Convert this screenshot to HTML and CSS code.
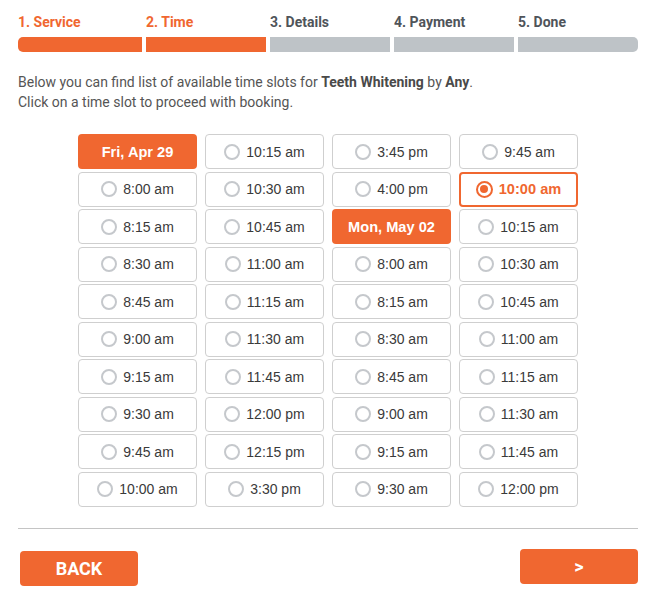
FILE: index.html
```html
<!DOCTYPE html>
<html lang="en">
<head>
<meta charset="utf-8">
<link rel="stylesheet" href="styles.css">
</head>
<body>
<div class="bkf">
  <div class="steps">
    <div class="step done"><span>1. Service</span><i></i></div>
    <div class="step done"><span>2. Time</span><i></i></div>
    <div class="step"><span>3. Details</span><i></i></div>
    <div class="step"><span>4. Payment</span><i></i></div>
    <div class="step"><span>5. Done</span><i></i></div>
  </div>

  <div class="info">
    Below you can find list of available time slots for <b>Teeth Whitening</b> by <b>Any</b>.<br>
    Click on a time slot to proceed with booking.
  </div>

  <div class="slots">
    <div class="col">
      <div class="day">Fri, Apr 29</div>
      <button class="hour"><em></em>8:00 am</button>
      <button class="hour"><em></em>8:15 am</button>
      <button class="hour"><em></em>8:30 am</button>
      <button class="hour"><em></em>8:45 am</button>
      <button class="hour"><em></em>9:00 am</button>
      <button class="hour"><em></em>9:15 am</button>
      <button class="hour"><em></em>9:30 am</button>
      <button class="hour"><em></em>9:45 am</button>
      <button class="hour"><em></em>10:00 am</button>
    </div>
    <div class="col">
      <button class="hour"><em></em>10:15 am</button>
      <button class="hour"><em></em>10:30 am</button>
      <button class="hour"><em></em>10:45 am</button>
      <button class="hour"><em></em>11:00 am</button>
      <button class="hour"><em></em>11:15 am</button>
      <button class="hour"><em></em>11:30 am</button>
      <button class="hour"><em></em>11:45 am</button>
      <button class="hour"><em></em>12:00 pm</button>
      <button class="hour"><em></em>12:15 pm</button>
      <button class="hour"><em></em>3:30 pm</button>
    </div>
    <div class="col">
      <button class="hour"><em></em>3:45 pm</button>
      <button class="hour"><em></em>4:00 pm</button>
      <div class="day">Mon, May 02</div>
      <button class="hour"><em></em>8:00 am</button>
      <button class="hour"><em></em>8:15 am</button>
      <button class="hour"><em></em>8:30 am</button>
      <button class="hour"><em></em>8:45 am</button>
      <button class="hour"><em></em>9:00 am</button>
      <button class="hour"><em></em>9:15 am</button>
      <button class="hour"><em></em>9:30 am</button>
    </div>
    <div class="col">
      <button class="hour"><em></em>9:45 am</button>
      <button class="hour active"><em></em>10:00 am</button>
      <button class="hour"><em></em>10:15 am</button>
      <button class="hour"><em></em>10:30 am</button>
      <button class="hour"><em></em>10:45 am</button>
      <button class="hour"><em></em>11:00 am</button>
      <button class="hour"><em></em>11:15 am</button>
      <button class="hour"><em></em>11:30 am</button>
      <button class="hour"><em></em>11:45 am</button>
      <button class="hour"><em></em>12:00 pm</button>
    </div>
  </div>

  <div class="nav">
    <button class="btn back">BACK</button>
    <button class="btn next">&gt;</button>
  </div>
</div>
</body>
</html>
```

FILE: styles.css
```css
* {box-sizing: border-box;}
body {margin: 0; font-family: Roboto, "Liberation Sans", sans-serif; color: #555;}
.bkf {width: 620px; margin-left: 18px; padding-top: 12px;}

.steps {display: flex;}
.step {width: 124px; padding-left: 4px;}
.step:first-child {padding-left: 0;}
.step span {display: block; font-size: 14px; font-weight: 700; line-height: 20px; color: #4f545a;}
.step i {display: block; height: 15px; margin-top: 5px; background: #bec3c7;}
.step.done span {color: #f06730;}
.step.done i {background: #f06730;}
.step:first-child i {border-radius: 5px 0 0 5px;}
.step:last-child i {border-radius: 0 5px 5px 0;}

.info {margin-top: 20px; font-size: 14px; line-height: 20px; color: #555;}
.info b {color: #4a4a4a;}

.slots {display: flex; justify-content: center; gap: 8px; margin-top: 22px;}
.col {display: flex; flex-direction: column; gap: 2.5px; width: 119px;}
.day, .hour {height: 35px; border-radius: 4px; font-family: "Liberation Sans", Arial, sans-serif; font-size: 14px;}
.day {background: #f06730; color: #fff; font-weight: 700; font-size: 14.6px; display: flex; align-items: center; justify-content: center;}
.hour {display: flex; align-items: center; justify-content: center; gap: 6px; padding: 0; background: #fff; border: 1px solid #cfcfcf; color: #3a3a3a;}
.hour em {width: 16px; height: 16px; border: 2px solid #c5c8cc; border-radius: 50%;}
.hour.active {border: 2px solid #f06730; color: #f06730; font-weight: 700; font-size: 14.6px;}
.hour.active em {width: 17px; height: 17px; border-color: #f06730; display: flex; align-items: center; justify-content: center;}
.hour.active em::after {content: ""; width: 8px; height: 8px; border-radius: 50%; background: #f06730;}

.nav {display: flex; justify-content: space-between; align-items: flex-start; margin-top: 21px; padding-top: 20px; border-top: 1px solid #c4c4c4;}
.btn {width: 118px; height: 35px; border: 0; border-radius: 4px; background: #f06730; color: #fff; font-family: Roboto, "Liberation Sans", sans-serif; font-size: 18px; font-weight: 700;}
.back {margin: 2px 0 0 2px;}
```
